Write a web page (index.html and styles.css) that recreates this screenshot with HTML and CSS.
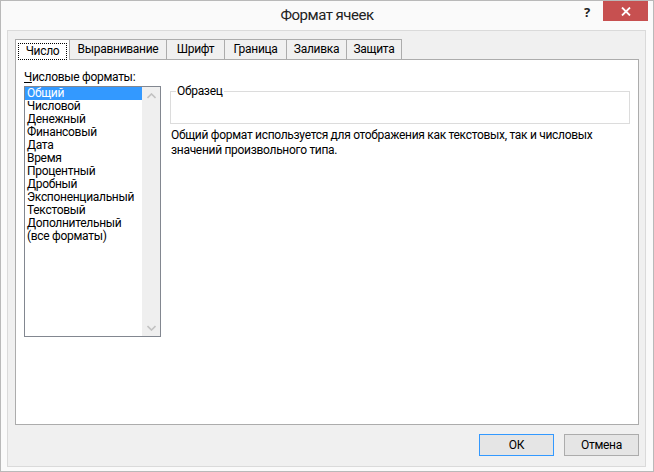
FILE: index.html
```html
<!DOCTYPE html>
<html lang="ru">
<head>
<meta charset="utf-8">
<title>Формат ячеек</title>
<link rel="stylesheet" href="styles.css">
</head>
<body>
<div class="window">
  <div class="titlebar">
    <div class="tb-spacer"></div>
    <div class="title">Формат ячеек</div>
    <div class="controls">
      <span class="help">?</span>
      <span class="close">
        <svg width="10" height="9" viewBox="0 0 10 9"><path d="M1 0.5 L9 8.5 M9 0.5 L1 8.5" stroke="#fff" stroke-width="1.8"/></svg>
      </span>
    </div>
  </div>
  <div class="frame">
    <div class="tabs">
      <div class="tab active"><span class="focus">Число</span></div>
      <div class="tab">Выравнивание</div>
      <div class="tab">Шрифт</div>
      <div class="tab">Граница</div>
      <div class="tab">Заливка</div>
      <div class="tab">Защита</div>
    </div>
    <div class="panel">
      <div class="left-col">
        <div class="caption"><u>Ч</u>исловые форматы:</div>
        <div class="listbox">
          <ul class="items">
            <li class="selected">Общий</li>
            <li>Числовой</li>
            <li>Денежный</li>
            <li>Финансовый</li>
            <li>Дата</li>
            <li>Время</li>
            <li>Процентный</li>
            <li>Дробный</li>
            <li>Экспоненциальный</li>
            <li>Текстовый</li>
            <li>Дополнительный</li>
            <li>(все форматы)</li>
          </ul>
          <div class="scrollbar">
            <svg width="9" height="6" viewBox="0 0 9 6"><path d="M0.5 5 L4.5 1 L8.5 5" fill="none" stroke="#c2c2c2" stroke-width="1.6"/></svg>
            <svg width="9" height="6" viewBox="0 0 9 6"><path d="M0.5 1 L4.5 5 L8.5 1" fill="none" stroke="#c2c2c2" stroke-width="1.6"/></svg>
          </div>
        </div>
      </div>
      <div class="right-col">
        <fieldset class="sample">
          <legend>Образец</legend>
        </fieldset>
        <p class="desc">Общий формат используется для отображения как текстовых, так и числовых значений произвольного типа.</p>
      </div>
    </div>
    <div class="buttons">
      <button class="btn default">ОК</button>
      <button class="btn">Отмена</button>
    </div>
  </div>
</div>
</body>
</html>
```

FILE: styles.css
```css
* { box-sizing: border-box; }
html, body { margin: 0; padding: 0; }
body {
  width: 654px;
  height: 472px;
  font-family: Roboto, "Noto Sans", sans-serif;
  font-size: 12px;
  letter-spacing: -0.3px;
  color: #000;
  overflow: hidden;
}
.window {
  width: 654px;
  height: 472px;
  border: 1px solid #b9b9b9;
  background: #fafafa;
  display: flex;
  flex-direction: column;
}
.titlebar {
  height: 29px;
  flex: none;
  display: grid;
  grid-template-columns: 1fr auto 1fr;
  align-items: start;
}
.title {
  font-size: 15px;
  letter-spacing: -0.5px;
  line-height: 29px;
  color: #222;
}
.controls {
  display: flex;
  justify-content: flex-end;
  align-items: flex-start;
}
.help {
  font-family: "Noto Sans", sans-serif;
  font-weight: bold;
  font-size: 13px;
  line-height: 22px;
  color: #222;
  margin-right: 13px;
}
.close {
  width: 45px;
  height: 20px;
  background: #c75050;
  margin-right: 5px;
  display: flex;
  align-items: center;
  justify-content: center;
}
.frame {
  flex: 1;
  margin: 0 7px 4px 6px;
  border: 1px solid #dadada;
  background: #f0f0f0;
  padding: 8px 6px 10px 7px;
  display: flex;
  flex-direction: column;
}
.tabs {
  display: flex;
  height: 20px;
  position: relative;
  z-index: 1;
}
.tab {
  height: 20px;
  border: 1px solid #acacac;
  border-bottom: none;
  margin-left: -1px;
  background: #f0f0f0;
  line-height: 18px;
  text-align: center;
  white-space: nowrap;
}
.tab:first-child { margin-left: 0; }
.tab:nth-child(1) { width: 55px; }
.tab:nth-child(2) { width: 98px; }
.tab:nth-child(3) { width: 59px; }
.tab:nth-child(4) { width: 63px; }
.tab:nth-child(5) { width: 61px; }
.tab:nth-child(6) { width: 56px; }
.tab.active {
  background: #fff;
  height: 21px;
  padding-top: 2px;
}
.focus {
  display: inline-block;
  outline: 1px dotted #000;
  width: 47px;
  height: 15px;
  line-height: 14px;
}
.panel {
  height: 366px;
  flex: none;
  background: #fff;
  border: 1px solid #acacac;
  padding: 9px 8px 0 8px;
  display: flex;
  gap: 9px;
}
.left-col {
  width: 137px;
  flex: none;
}
.caption {
  line-height: 16px;
  margin-bottom: 1px;
}
.listbox {
  height: 251px;
  border: 1px solid #828790;
  display: flex;
}
.items {
  list-style: none;
  margin: 0;
  padding: 0;
  flex: 1;
}
.items li {
  height: 13px;
  line-height: 13px;
  padding-left: 2px;
  white-space: nowrap;
}
.items li.selected {
  background: #3399ff;
  color: #fff;
}
.scrollbar {
  width: 18px;
  background: #efefef;
  display: flex;
  flex-direction: column;
  justify-content: space-between;
  align-items: center;
  padding: 6px 0 5px;
}
.right-col {
  flex: 1;
  padding-top: 15px;
}
.sample {
  margin: 0;
  padding: 0;
  height: 40px;
  border: 1px solid #dcdcdc;
  min-width: 0;
}
.sample legend {
  margin-left: 5px;
  padding: 0 1px;
  line-height: 14px;
}
.desc {
  margin: 4px 0 0 1px;
  line-height: 15px;
}
.buttons {
  display: flex;
  justify-content: flex-end;
  gap: 10px;
  margin-top: 9px;
}
.btn {
  width: 75px;
  height: 22px;
  border: 1px solid #acacac;
  background: #e5e5e5;
  font-family: inherit;
  font-size: 12px;
  letter-spacing: inherit;
  color: #000;
  padding: 0;
  margin: 0;
}
.btn.default {
  border-color: #3399ff;
}
```
